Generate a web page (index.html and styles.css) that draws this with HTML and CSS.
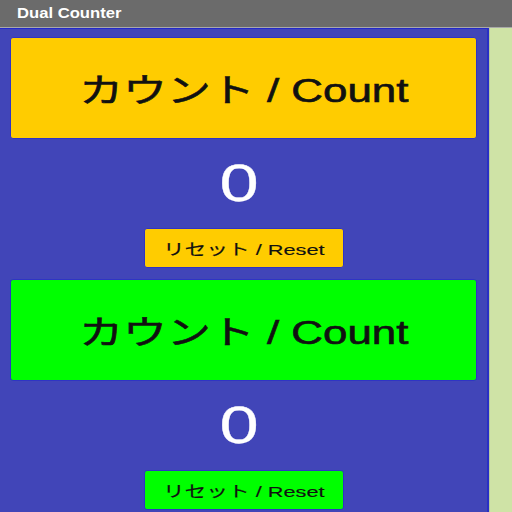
FILE: index.html
```html
<!DOCTYPE html>
<html lang="ja">
<head>
<meta charset="utf-8">
<title>Dual Counter</title>
<link rel="stylesheet" href="styles.css">
</head>
<body>
<header class="titlebar"><span class="title">Dual Counter</span></header>
<div class="main">
  <div class="panel">
    <section class="counter yellow">
      <button class="count-btn"><span class="stretch big">カウント / Count</span></button>
      <div class="value"><span class="stretch num">0</span></div>
      <button class="reset-btn"><span class="stretch small">リセット / Reset</span></button>
    </section>
    <section class="counter green">
      <button class="count-btn"><span class="stretch big">カウント / Count</span></button>
      <div class="value"><span class="stretch num">0</span></div>
      <button class="reset-btn"><span class="stretch small">リセット / Reset</span></button>
    </section>
  </div>
  <div class="side"></div>
</div>
</body>
</html>
```
FILE: styles.css
```css
* { box-sizing: border-box; }
html, body { margin: 0; padding: 0; height: 100%; overflow: hidden; }
body {
  font-family: "Liberation Sans", "Noto Sans CJK JP", sans-serif;
  background: #cfe3a6;
}
.titlebar {
  height: 28px;
  background: #6b6b6b;
  border-bottom: 1px solid #a9a9a9;
  display: flex;
  align-items: center;
  padding-left: 17px;
}
.title {
  display: inline-block;
  color: #fff;
  font-weight: bold;
  font-size: 14.6px;
  transform: scaleX(1.14);
  transform-origin: left center;
  margin-top: -2px;
}
.main {
  display: flex;
  height: calc(100% - 28px);
}
.panel {
  width: 489px;
  background: #4145b8;
  border-top: 1px solid #2328c8;
  border-right: 2px solid #2a2fc4;
  padding-top: 8px;
  display: flex;
  flex-direction: column;
}
.side {
  flex: 1;
  background: #cfe3a6;
  border-left: 1px solid #b8c9a0;
}
.counter {
  display: flex;
  flex-direction: column;
  margin-bottom: 11px;
}
.count-btn {
  margin: 0 10px 0 10px;
  height: 102px;
  border: 1px solid #2f34c4;
  border-radius: 3px;
  padding: 0;
  display: flex;
  align-items: center;
  justify-content: center;
  font-family: inherit;
  color: #111;
}
.reset-btn {
  align-self: center;
  width: 200px;
  height: 40px;
  border: 1px solid #2f34c4;
  border-radius: 3px;
  padding: 0;
  display: flex;
  align-items: center;
  justify-content: center;
  font-family: inherit;
  color: #111;
}
.yellow .count-btn, .yellow .reset-btn { background: #ffcc00; }
.green .count-btn, .green .reset-btn { background: #00ff00; }
.value {
  height: 89px;
  display: flex;
  align-items: center;
  justify-content: center;
  padding-right: 8px;
}
.stretch { display: inline-block; white-space: nowrap; }
.big {
  font-size: 33px;
  transform: scaleX(1.33);
  -webkit-text-stroke: 0.6px #111;
}
.num {
  font-size: 51px;
  color: #fff;
  transform: scaleX(1.38);
  -webkit-text-stroke: 0.3px #fff;
}
.small {
  font-size: 15.5px;
  transform: scaleX(1.4);
  -webkit-text-stroke: 0.15px #111;
}
```
